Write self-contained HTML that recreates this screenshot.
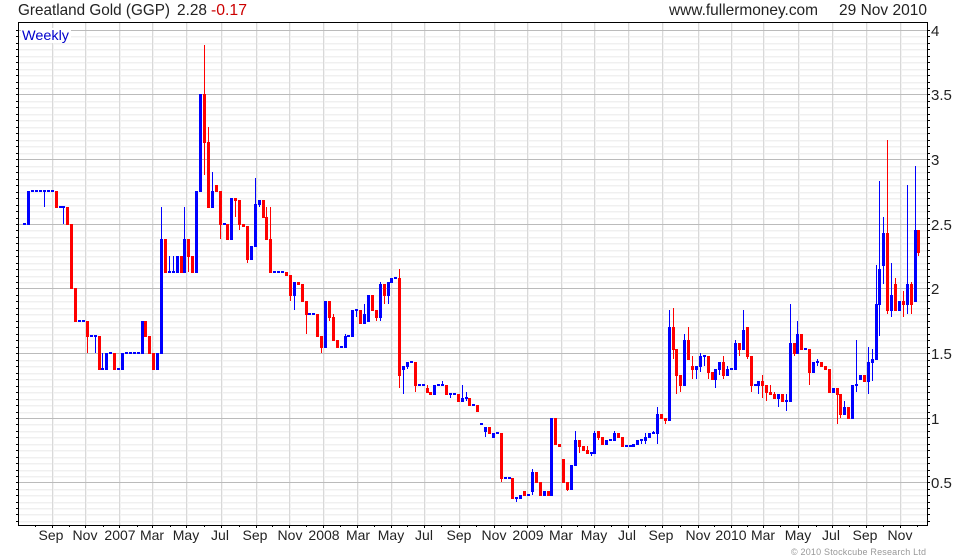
<!DOCTYPE html>
<html><head><meta charset="utf-8"><title>Greatland Gold (GGP)</title>
<style>
html,body{margin:0;padding:0;background:#fff;width:980px;height:560px;overflow:hidden}
svg{display:block}
text{font-family:"Liberation Sans",Arial,sans-serif;font-size:14px;fill:#222}
.x{text-anchor:middle}
</style></head><body>
<svg width="980" height="560" viewBox="0 0 980 560" xmlns="http://www.w3.org/2000/svg">
<defs>
<path id="m" d="M0 36.5H1M0 43.5H1M0 49.5H1M0 56.5H1M0 62.5H1M0 69.5H1M0 75.5H1M0 82.5H1M0 88.5H1M0 101.5H1M0 107.5H1M0 114.5H1M0 120.5H1M0 127.5H1M0 133.5H1M0 140.5H1M0 146.5H1M0 153.5H1M0 166.5H1M0 172.5H1M0 179.5H1M0 185.5H1M0 192.5H1M0 198.5H1M0 205.5H1M0 211.5H1M0 218.5H1M0 230.5H1M0 237.5H1M0 243.5H1M0 250.5H1M0 256.5H1M0 263.5H1M0 269.5H1M0 276.5H1M0 282.5H1M0 295.5H1M0 301.5H1M0 308.5H1M0 314.5H1M0 321.5H1M0 327.5H1M0 334.5H1M0 340.5H1M0 347.5H1M0 360.5H1M0 366.5H1M0 373.5H1M0 379.5H1M0 386.5H1M0 392.5H1M0 399.5H1M0 405.5H1M0 412.5H1M0 424.5H1M0 431.5H1M0 437.5H1M0 444.5H1M0 450.5H1M0 457.5H1M0 463.5H1M0 470.5H1M0 476.5H1M0 489.5H1M0 495.5H1M0 502.5H1M0 508.5H1M0 514.5H1M0 521.5H1"/>
<path id="M" d="M0 30.5H1M0 94.5H1M0 159.5H1M0 224.5H1M0 288.5H1M0 353.5H1M0 418.5H1M0 482.5H1"/>
<path id="v" d="M52.5 23V525M85.5 23V525M119.5 23V525M152.5 23V525M186.5 23V525M221.5 23V525M256.5 23V525M289.5 23V525M323.5 23V525M357.5 23V525M391.5 23V525M424.5 23V525M459.5 23V525M494.5 23V525M527.5 23V525M561.5 23V525M594.5 23V525M628.5 23V525M662.5 23V525M698.5 23V525M731.5 23V525M763.5 23V525M798.5 23V525M832.5 23V525M866.5 23V525M900.5 23V525"/>
</defs>
<g shape-rendering="crispEdges" fill="none" stroke-width="1">
<use href="#m" transform="translate(19 1) scale(908 1)" stroke="#f8f8f8"/>
<use href="#m" transform="translate(19 0) scale(908 1)" stroke="#f0f0f0"/>
<use href="#v" transform="translate(1 0)" stroke="#f3f3f3"/>
<use href="#v" stroke="#d9d9d9"/>
<use href="#M" transform="translate(19 0) scale(908 1)" stroke="#bbbbbb"/>
<use href="#m" transform="translate(16 0) scale(2 1)" stroke="#000"/>
<use href="#M" transform="translate(16 0) scale(2 1)" stroke="#000"/>
<use href="#m" transform="translate(928 0) scale(2 1)" stroke="#000"/>
<use href="#M" transform="translate(928 0) scale(2 1)" stroke="#000"/>
<path stroke="#000" d="M52.5 525V528M85.5 525V528M119.5 525V528M152.5 525V528M186.5 525V528M221.5 525V528M256.5 525V528M289.5 525V528M323.5 525V528M357.5 525V528M391.5 525V528M424.5 525V528M459.5 525V528M494.5 525V528M527.5 525V528M561.5 525V528M594.5 525V528M628.5 525V528M662.5 525V528M698.5 525V528M731.5 525V528M763.5 525V528M798.5 525V528M832.5 525V528M866.5 525V528M900.5 525V528"/>
<path stroke="#000" d="M35.5 525V527M69.5 525V527M103.5 525V527M137.5 525V527M170.5 525V527M204.5 525V527M239.5 525V527M272.5 525V527M306.5 525V527M340.5 525V527M374.5 525V527M407.5 525V527M441.5 525V527M476.5 525V527M510.5 525V527M544.5 525V527M577.5 525V527M611.5 525V527M645.5 525V527M680.5 525V527M714.5 525V527M747.5 525V527M780.5 525V527M816.5 525V527M849.5 525V527M883.5 525V527M917.5 525V527"/>
<rect x="21" y="28" width="50" height="15" fill="#fff" stroke="none"/>
</g>
<g shape-rendering="crispEdges" stroke="none">
<!-- wicks -->
<path fill="#0000ff" d="M44 190h1V207h-1zM63 207h1V224h-1zM95 336h1V353h-1zM102 353h1V369h-1zM161 207h1V240h-1zM169 256h1V272h-1zM173 256h1V272h-1zM184 207h1V240h-1zM212 172h1V192h-1zM255 178h1V205h-1zM259 204h1V207h-1zM294 295h1V310h-1zM345 334h1V337h-1zM356 310h1V317h-1zM364 304h1V315h-1zM380 282h1V321h-1zM388 295h1V304h-1zM403 369h1V394h-1zM407 366h1V369h-1zM442 381h1V385h-1zM450 394h1V398h-1zM462 385h1V399h-1zM466 392h1V401h-1zM485 431h1V437h-1zM516 498h1V502h-1zM532 469h1V495h-1zM575 431h1V441h-1zM591 453h1V456h-1zM594 431h1V434h-1zM614 431h1V434h-1zM641 440h1V444h-1zM645 433h1V444h-1zM653 431h1V433h-1zM657 407h1V444h-1zM669 310h1V328h-1zM684 334h1V341h-1zM696 369h1V379h-1zM700 353h1V372h-1zM704 356h1V366h-1zM715 379h1V388h-1zM719 369h1V375h-1zM727 366h1V370h-1zM735 340h1V344h-1zM743 310h1V331h-1zM758 385h1V394h-1zM778 398h1V407h-1zM786 394h1V411h-1zM790 304h1V344h-1zM797 321h1V335h-1zM817 359h1V366h-1zM844 401h1V408h-1zM856 340h1V392h-1zM868 347h1V394h-1zM872 349h1V381h-1zM876 265h1V305h-1zM879 181h1V336h-1zM883 217h1V284h-1zM891 263h1V317h-1zM907 185h1V314h-1zM915 166h1V231h-1z"/>
<path fill="#ff0000" d="M87 337h1V353h-1zM188 257h1V272h-1zM204 45h1V175h-1zM208 127h1V143h-1zM220 225h1V239h-1zM235 200h1V217h-1zM239 224h1V230h-1zM247 259h1V263h-1zM266 207h1V218h-1zM270 207h1V240h-1zM290 295h1V301h-1zM306 314h1V334h-1zM321 347h1V353h-1zM329 317h1V321h-1zM333 314h1V318h-1zM376 317h1V321h-1zM384 295h1V304h-1zM399 269h1V388h-1zM415 385h1V392h-1zM427 385h1V389h-1zM501 478h1V482h-1zM567 489h1V491h-1zM579 446h1V453h-1zM587 446h1V451h-1zM598 437h1V440h-1zM665 420h1V424h-1zM673 308h1V359h-1zM676 375h1V394h-1zM680 385h1V392h-1zM688 327h1V341h-1zM692 356h1V379h-1zM708 372h1V379h-1zM723 356h1V379h-1zM739 349h1V356h-1zM747 356h1V359h-1zM751 385h1V392h-1zM762 375h1V398h-1zM766 392h1V401h-1zM770 385h1V393h-1zM774 392h1V395h-1zM794 353h1V356h-1zM809 372h1V385h-1zM837 394h1V424h-1zM840 414h1V418h-1zM887 140h1V314h-1zM895 278h1V285h-1zM903 291h1V317h-1zM911 282h1V314h-1zM918 252h1V256h-1z"/>
<!-- bodies -->
<path fill="#0000ff" d="M23 223h3V225h-3zM27 191h3V225h-3zM31 190h3V192h-3zM35 190h3V192h-3zM39 190h3V192h-3zM43 190h3V192h-3zM47 190h3V192h-3zM51 190h3V192h-3zM59 206h3V208h-3zM62 206h3V208h-3zM78 320h3V322h-3zM82 320h3V322h-3zM90 335h3V337h-3zM94 335h3V337h-3zM101 368h3V370h-3zM105 353h3V370h-3zM109 352h3V354h-3zM117 368h3V370h-3zM121 353h3V370h-3zM125 352h3V354h-3zM129 352h3V354h-3zM133 352h3V354h-3zM137 352h3V354h-3zM141 321h3V354h-3zM156 353h3V370h-3zM160 239h3V354h-3zM168 271h3V273h-3zM172 271h3V273h-3zM176 256h3V273h-3zM183 239h3V273h-3zM195 191h3V273h-3zM199 94h3V192h-3zM211 191h3V208h-3zM223 223h3V225h-3zM230 198h3V240h-3zM250 246h3V260h-3zM254 204h3V247h-3zM258 200h3V205h-3zM273 271h3V273h-3zM277 271h3V273h-3zM281 271h3V273h-3zM293 282h3V296h-3zM308 313h3V315h-3zM312 313h3V315h-3zM324 301h3V348h-3zM340 346h3V348h-3zM344 336h3V348h-3zM347 335h3V337h-3zM351 310h3V337h-3zM355 309h3V311h-3zM363 314h3V324h-3zM367 295h3V322h-3zM379 284h3V318h-3zM387 282h3V296h-3zM390 278h3V283h-3zM394 277h3V279h-3zM402 366h3V370h-3zM406 362h3V367h-3zM410 361h3V363h-3zM418 384h3V386h-3zM422 384h3V386h-3zM433 385h3V395h-3zM437 384h3V386h-3zM441 384h3V386h-3zM449 393h3V395h-3zM453 393h3V395h-3zM461 398h3V402h-3zM465 397h3V399h-3zM472 404h3V406h-3zM480 423h3V425h-3zM484 427h3V432h-3zM492 433h3V438h-3zM496 432h3V434h-3zM504 477h3V479h-3zM508 477h3V479h-3zM515 497h3V499h-3zM519 495h3V499h-3zM527 494h3V496h-3zM531 472h3V492h-3zM543 491h3V496h-3zM550 418h3V496h-3zM570 465h3V490h-3zM574 440h3V466h-3zM590 452h3V454h-3zM593 433h3V454h-3zM605 440h3V445h-3zM609 439h3V441h-3zM613 433h3V441h-3zM625 445h3V447h-3zM629 445h3V447h-3zM632 444h3V447h-3zM636 440h3V445h-3zM640 439h3V441h-3zM644 437h3V441h-3zM648 433h3V438h-3zM652 432h3V434h-3zM656 414h3V434h-3zM668 327h3V421h-3zM683 340h3V386h-3zM695 366h3V370h-3zM699 356h3V367h-3zM703 355h3V357h-3zM714 369h3V380h-3zM718 362h3V370h-3zM726 369h3V376h-3zM730 368h3V370h-3zM734 343h3V370h-3zM742 330h3V350h-3zM754 384h3V386h-3zM757 381h3V386h-3zM777 394h3V399h-3zM785 400h3V402h-3zM789 343h3V402h-3zM796 334h3V354h-3zM804 348h3V350h-3zM812 362h3V373h-3zM816 361h3V363h-3zM832 388h3V393h-3zM843 407h3V415h-3zM851 385h3V419h-3zM855 384h3V386h-3zM859 375h3V380h-3zM867 362h3V382h-3zM871 359h3V363h-3zM875 304h3V360h-3zM878 269h3V305h-3zM882 233h3V266h-3zM890 295h3V311h-3zM898 301h3V311h-3zM906 284h3V305h-3zM914 230h3V302h-3z"/>
<path fill="#ff0000" d="M55 191h3V208h-3zM66 207h3V225h-3zM70 224h3V289h-3zM74 288h3V322h-3zM86 321h3V337h-3zM98 336h3V370h-3zM113 353h3V370h-3zM144 321h3V337h-3zM148 336h3V354h-3zM152 353h3V370h-3zM164 239h3V273h-3zM180 256h3V273h-3zM187 239h3V257h-3zM191 256h3V273h-3zM203 94h3V143h-3zM207 142h3V208h-3zM215 185h3V192h-3zM219 191h3V225h-3zM226 224h3V240h-3zM234 198h3V201h-3zM238 200h3V225h-3zM242 224h3V227h-3zM246 226h3V260h-3zM262 200h3V218h-3zM265 217h3V240h-3zM269 239h3V273h-3zM285 272h3V276h-3zM289 275h3V296h-3zM297 282h3V285h-3zM301 284h3V302h-3zM305 301h3V315h-3zM316 314h3V337h-3zM320 336h3V348h-3zM328 301h3V318h-3zM332 317h3V341h-3zM336 340h3V348h-3zM359 310h3V324h-3zM371 295h3V311h-3zM375 310h3V318h-3zM383 284h3V296h-3zM398 278h3V376h-3zM414 362h3V386h-3zM426 388h3V393h-3zM429 392h3V395h-3zM445 385h3V395h-3zM457 394h3V402h-3zM468 398h3V406h-3zM476 405h3V412h-3zM488 427h3V434h-3zM500 433h3V479h-3zM511 478h3V499h-3zM523 491h3V496h-3zM535 472h3V483h-3zM539 482h3V496h-3zM547 491h3V496h-3zM554 418h3V445h-3zM558 444h3V447h-3zM562 459h3V483h-3zM566 482h3V490h-3zM578 440h3V447h-3zM582 446h3V451h-3zM586 450h3V454h-3zM597 431h3V438h-3zM601 437h3V445h-3zM617 433h3V438h-3zM621 437h3V447h-3zM660 414h3V419h-3zM664 418h3V421h-3zM672 327h3V350h-3zM675 349h3V376h-3zM679 375h3V386h-3zM687 340h3V360h-3zM691 366h3V370h-3zM707 356h3V373h-3zM711 372h3V380h-3zM722 362h3V376h-3zM738 343h3V350h-3zM746 327h3V357h-3zM750 356h3V386h-3zM761 381h3V386h-3zM765 385h3V393h-3zM769 392h3V395h-3zM773 394h3V399h-3zM781 394h3V402h-3zM793 343h3V354h-3zM800 334h3V350h-3zM808 349h3V373h-3zM820 362h3V367h-3zM824 366h3V370h-3zM828 369h3V393h-3zM836 388h3V395h-3zM839 394h3V415h-3zM847 407h3V419h-3zM863 375h3V382h-3zM886 233h3V311h-3zM894 284h3V311h-3zM902 301h3V305h-3zM910 284h3V305h-3zM917 230h3V253h-3z"/>
</g>
<g shape-rendering="crispEdges" fill="none" stroke="#000" stroke-width="1">
<path d="M18.5 22.5H927.5V525.5H18.5Z"/>
</g>
<text x="18" y="15" style="font-size:16px" textLength="152" lengthAdjust="spacingAndGlyphs">Greatland Gold (GGP)</text>
<text x="177" y="15" style="font-size:16px" textLength="30" lengthAdjust="spacingAndGlyphs">2.28</text>
<text x="211" y="15" style="font-size:16px;fill:#cc0000" textLength="36" lengthAdjust="spacingAndGlyphs">-0.17</text>
<text x="669" y="15" style="font-size:16px" textLength="149" lengthAdjust="spacingAndGlyphs">www.fullermoney.com</text>
<text x="839" y="15" style="font-size:16px" textLength="88" lengthAdjust="spacingAndGlyphs">29 Nov 2010</text>
<text x="22" y="40" style="fill:#0000cc;font-size:14px" textLength="47" lengthAdjust="spacingAndGlyphs">Weekly</text>
<text x="931" y="36" style="font-size:15px">4</text>
<text x="931" y="100" style="font-size:15px">3.5</text>
<text x="931" y="165" style="font-size:15px">3</text>
<text x="931" y="230" style="font-size:15px">2.5</text>
<text x="931" y="294" style="font-size:15px">2</text>
<text x="931" y="359" style="font-size:15px">1.5</text>
<text x="931" y="424" style="font-size:15px">1</text>
<text x="931" y="488" style="font-size:15px">0.5</text>
<text class="x" x="51" y="540">Sep</text><text class="x" x="85" y="540">Nov</text><text class="x" x="120" y="540">2007</text><text class="x" x="152" y="540">Mar</text><text class="x" x="186" y="540">May</text><text class="x" x="220" y="540">Jul</text><text class="x" x="255" y="540">Sep</text><text class="x" x="290" y="540">Nov</text><text class="x" x="324" y="540">2008</text><text class="x" x="358" y="540">Mar</text><text class="x" x="391" y="540">May</text><text class="x" x="424" y="540">Jul</text><text class="x" x="459" y="540">Sep</text><text class="x" x="494" y="540">Nov</text><text class="x" x="528" y="540">2009</text><text class="x" x="561" y="540">Mar</text><text class="x" x="594" y="540">May</text><text class="x" x="627" y="540">Jul</text><text class="x" x="661" y="540">Sep</text><text class="x" x="698" y="540">Nov</text><text class="x" x="731" y="540">2010</text><text class="x" x="763" y="540">Mar</text><text class="x" x="798" y="540">May</text><text class="x" x="831" y="540">Jul</text><text class="x" x="865" y="540">Sep</text><text class="x" x="900" y="540">Nov</text>
<text x="791" y="555" style="font-size:9px;fill:#999999" textLength="135" lengthAdjust="spacing">© 2010 Stockcube Research Ltd</text>
</svg>
</body></html>
